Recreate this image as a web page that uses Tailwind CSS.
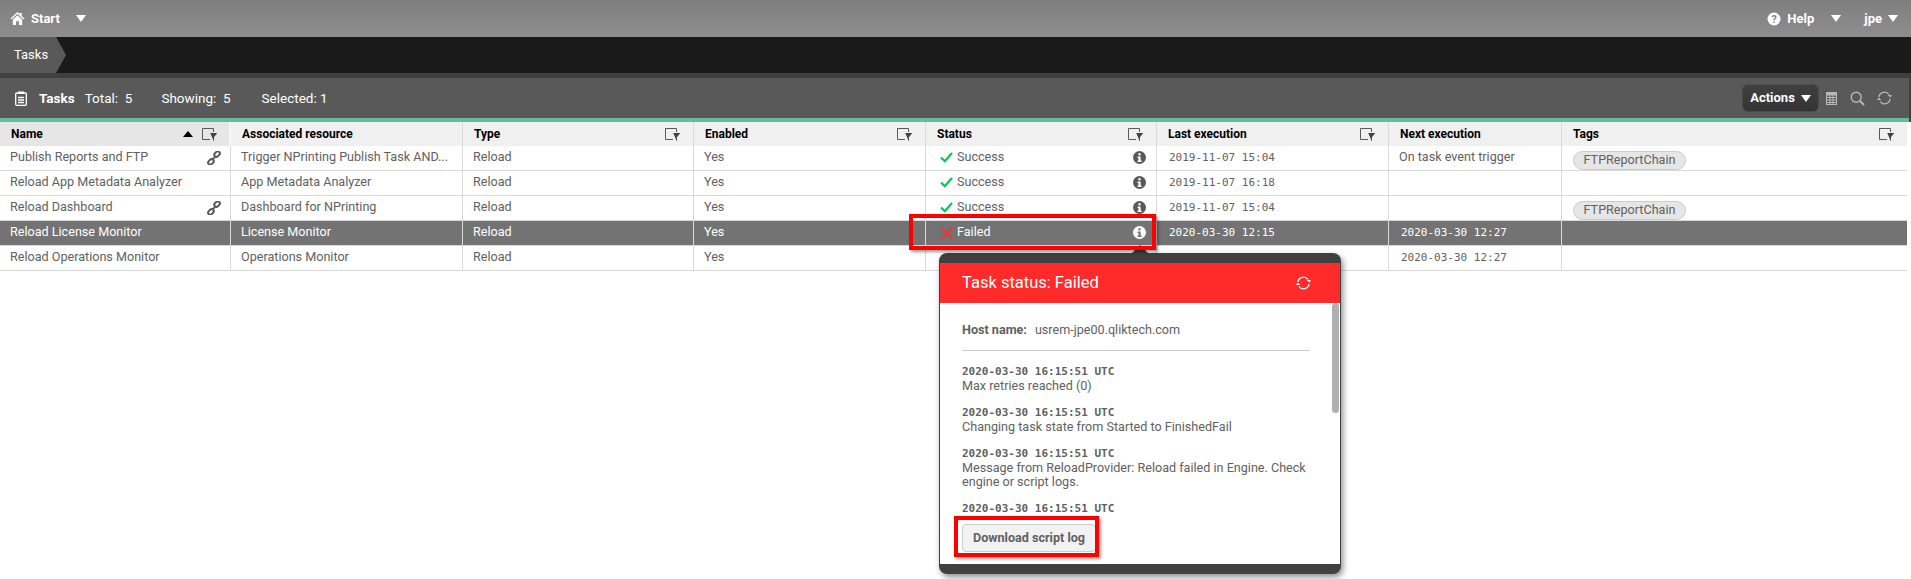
<!DOCTYPE html>
<html>
<head>
<meta charset="utf-8">
<script src="https://cdn.jsdelivr.net/npm/@tailwindcss/browser@4"></script>
</head>
<body class="bg-white overflow-hidden font-['Roboto',sans-serif] text-[12.6px] text-[#616161]">
<div class="relative w-[1911px] h-[579px] overflow-hidden">
  <!-- top bar -->
  <div class="h-[37px] bg-linear-to-b from-[#7e7e7e] to-[#8e8e8e] flex items-center text-white font-bold text-[13px]">
    <svg class="ml-[10px] w-[15px] h-[15px]" viewBox="0 0 16 16" fill="#fff"><path d="M8 1 L0.5 8 L1.5 9 L8 3 L14.5 9 L15.5 8 L12.5 5.2 V2 H10.5 V3.3 Z"/><path d="M3 9 L8 4.5 L13 9 V15 H9.5 V11 H6.5 V15 H3 Z"/></svg>
    <span class="ml-[6px]">Start</span>
    <svg class="ml-[16px] w-[10px] h-[7px]" viewBox="0 0 10 7" fill="#fff"><path d="M0 0H10L5 7Z"/></svg>
    <div class="flex-1"></div>
    <svg class="w-[14px] h-[14px]" viewBox="0 0 14 14"><circle cx="7" cy="7" r="6.5" fill="#fff"/><text x="7" y="10.8" text-anchor="middle" font-size="10.5" font-weight="700" fill="#808080" font-family="Roboto">?</text></svg>
    <span class="ml-[6px]">Help</span>
    <svg class="ml-[17px] w-[10px] h-[7px]" viewBox="0 0 10 7" fill="#fff"><path d="M0 0H10L5 7Z"/></svg>
    <span class="ml-[23px]">jpe</span>
    <svg class="ml-[6px] mr-[13px] w-[10px] h-[7px]" viewBox="0 0 10 7" fill="#fff"><path d="M0 0H10L5 7Z"/></svg>
  </div>
  <!-- breadcrumb -->
  <div class="h-[36px] bg-[#1a1a1a] flex">
    <div class="w-[66px] h-full bg-[#595959] [clip-path:polygon(0_0,56px_0,66px_50%,56px_100%,0_100%)] text-white text-[13px] pl-[14px] flex items-center">Tasks</div>
  </div>
  <div class="bg-[#404040] pt-[5px] pr-[2px]">
    <!-- toolbar -->
    <div class="h-[40px] bg-[#595959] flex items-center text-white text-[13.5px]">
      <svg class="ml-[15px] w-[12px] h-[15px]" viewBox="0 0 12 15" fill="none" stroke="#fff" stroke-width="1.3"><rect x="0.7" y="2" width="10.6" height="12.3" rx="1"/><rect x="3" y="0.5" width="6" height="2.5" fill="#fff" stroke="none"/><path d="M3 6.5H9M3 9H9M3 11.5H9"/></svg>
      <span class="ml-[12px] font-bold text-[13.5px]">Tasks</span>
      <span class="ml-[10px]">Total:&nbsp; 5</span>
      <span class="ml-[29px]">Showing:&nbsp; 5</span>
      <span class="ml-[31px]">Selected: 1</span>
      <div class="flex-1"></div>
      <div class="w-[77px] h-[28px] rounded-[6px] bg-linear-to-b from-[#404040] to-[#333333] border border-[#4a4a4a] flex items-center justify-center font-bold text-[13px]">Actions
        <svg class="ml-[6px] w-[10px] h-[7px]" viewBox="0 0 10 7" fill="#fff"><path d="M0 0H10L5 7Z"/></svg>
      </div>
      <svg class="ml-[7px] w-[11px] h-[13px]" viewBox="0 0 11 13" fill="none" stroke="#b8b8b8"><rect x="0.5" y="0.5" width="10" height="12"/><rect x="0.5" y="0.5" width="10" height="2.5" fill="#b8b8b8"/><path d="M0.5 5.5H10.5M0.5 8H10.5M0.5 10.5H10.5M4 3V12.5M7 3V12.5"/></svg>
      <svg class="ml-[13px] w-[15px] h-[15px]" viewBox="0 0 15 15" fill="none" stroke="#b8b8b8"><circle cx="6.2" cy="6.2" r="5" stroke-width="1.4"/><path d="M10 10L14 14" stroke-width="2"/></svg>
      <svg class="ml-[11px] mr-[16px] w-[17px] h-[16px]" viewBox="0 0 17 16" fill="none" stroke="#b8b8b8" stroke-width="1.3"><path d="M3 7A5.5 5.5 0 0 1 13 4.5"/><path d="M14 9A5.5 5.5 0 0 1 4 11.5"/><path d="M14.5 8L11.5 5.5H16Z M2.5 8L5.5 10.5H1Z" fill="#b8b8b8" stroke="none" transform="translate(0 -0.5)"/></svg>
    </div>
    <div class="h-[4px] bg-[#64bc9e]"></div>
  </div>
  <!-- table -->
  <div class="w-[1907px] grid grid-cols-[231px_232px_231px_232px_231px_232px_173px_345px] leading-none">
    <!-- header -->
    <div class="relative h-[24px] bg-[#e6e6e6] border-r-2 border-[#f5f5f5] pl-[11px] flex items-center font-bold text-[12px] text-black">Name
      <svg class="absolute left-[183px] top-[9px] w-[10px] h-[6px]" viewBox="0 0 10 6" fill="#000"><path d="M0 6H10L5 0Z"/></svg>
      <svg class="absolute left-[202px] top-[6px] w-[15px] h-[13px]" viewBox="0 0 15 13" fill="none" stroke="#595959"><path d="M8 11.5H0.5V0.5H11.5V4"/><path d="M8.5 5.5H14.5L11.5 9V12.5" fill="#404040" stroke="#404040" stroke-width="1"/></svg>
    </div>
    <div class="relative h-[24px] bg-[#f0f0f0] border-r border-[#d9d9d9] pl-[11px] flex items-center font-bold text-[12px] text-black">Associated resource</div>
    <div class="relative h-[24px] bg-[#f0f0f0] border-r border-[#d9d9d9] pl-[11px] flex items-center font-bold text-[12px] text-black">Type
      <svg class="absolute right-[13px] top-[6px] w-[15px] h-[13px]" viewBox="0 0 15 13" fill="none" stroke="#595959"><path d="M8 11.5H0.5V0.5H11.5V4"/><path d="M8.5 5.5H14.5L11.5 9V12.5" fill="#404040" stroke="#404040" stroke-width="1"/></svg>
    </div>
    <div class="relative h-[24px] bg-[#f0f0f0] border-r border-[#d9d9d9] pl-[11px] flex items-center font-bold text-[12px] text-black">Enabled
      <svg class="absolute right-[13px] top-[6px] w-[15px] h-[13px]" viewBox="0 0 15 13" fill="none" stroke="#595959"><path d="M8 11.5H0.5V0.5H11.5V4"/><path d="M8.5 5.5H14.5L11.5 9V12.5" fill="#404040" stroke="#404040" stroke-width="1"/></svg>
    </div>
    <div class="relative h-[24px] bg-[#f0f0f0] border-r border-[#d9d9d9] pl-[11px] flex items-center font-bold text-[12px] text-black">Status
      <svg class="absolute right-[13px] top-[6px] w-[15px] h-[13px]" viewBox="0 0 15 13" fill="none" stroke="#595959"><path d="M8 11.5H0.5V0.5H11.5V4"/><path d="M8.5 5.5H14.5L11.5 9V12.5" fill="#404040" stroke="#404040" stroke-width="1"/></svg>
    </div>
    <div class="relative h-[24px] bg-[#f0f0f0] border-r border-[#d9d9d9] pl-[11px] flex items-center font-bold text-[12px] text-black">Last execution
      <svg class="absolute right-[13px] top-[6px] w-[15px] h-[13px]" viewBox="0 0 15 13" fill="none" stroke="#595959"><path d="M8 11.5H0.5V0.5H11.5V4"/><path d="M8.5 5.5H14.5L11.5 9V12.5" fill="#404040" stroke="#404040" stroke-width="1"/></svg>
    </div>
    <div class="relative h-[24px] bg-[#f0f0f0] border-r border-[#d9d9d9] pl-[11px] flex items-center font-bold text-[12px] text-black">Next execution</div>
    <div class="relative h-[24px] bg-[#f0f0f0] pl-[11px] flex items-center font-bold text-[12px] text-black">Tags
      <svg class="absolute right-[13px] top-[6px] w-[15px] h-[13px]" viewBox="0 0 15 13" fill="none" stroke="#595959"><path d="M8 11.5H0.5V0.5H11.5V4"/><path d="M8.5 5.5H14.5L11.5 9V12.5" fill="#404040" stroke="#404040" stroke-width="1"/></svg>
    </div>

    <!-- row 1 -->
    <div class="relative h-[25px] border-r border-b border-[#d9d9d9] pl-[10px] pb-[1px] flex items-center">Publish Reports and FTP
      <svg class="absolute left-[207px] top-[5px] w-[14px] h-[14px]" viewBox="0 0 14 14" fill="none" stroke="#595959" stroke-width="2"><rect x="7" y="1" width="6" height="4.2" rx="2" transform="rotate(-45 10 3)"/><rect x="1" y="8.8" width="6" height="4.2" rx="2" transform="rotate(-45 4 11)"/><path d="M5.5 8.5L8.5 5.5"/></svg>
    </div>
    <div class="h-[25px] border-r border-b border-[#d9d9d9] pl-[10px] pb-[1px] flex items-center">Trigger NPrinting Publish Task AND...</div>
    <div class="h-[25px] border-r border-b border-[#d9d9d9] pl-[10px] pb-[1px] flex items-center">Reload</div>
    <div class="h-[25px] border-r border-b border-[#d9d9d9] pl-[10px] pb-[1px] flex items-center">Yes</div>
    <div class="relative h-[25px] border-r border-b border-[#d9d9d9] pl-[14px] pb-[1px] flex items-center">
      <svg class="w-[13px] h-[11px] mr-[4px]" viewBox="0 0 13 11" fill="none" stroke="#00c853" stroke-width="2.2"><path d="M1 5.5L4.8 9.2L12 1"/></svg>Success
      <svg class="absolute right-[10px] top-[5px] w-[13px] h-[13px]" viewBox="0 0 13 13"><circle cx="6.5" cy="6.5" r="6.5" fill="#595959"/><rect x="5.4" y="2.2" width="2.2" height="2.2" fill="#fff"/><path d="M4.6 5.5H7.6V9.6H8.6V11H4.6V9.6H5.5V6.9H4.6Z" fill="#fff"/></svg>
    </div>
    <div class="h-[25px] border-r border-b border-[#d9d9d9] pl-[12px] pb-[1px] flex items-center font-['DejaVu_Sans_Mono',monospace] text-[11px]">2019-11-07 15:04</div>
    <div class="h-[25px] border-r border-b border-[#d9d9d9] pl-[10px] pb-[1px] flex items-center">On task event trigger</div>
    <div class="h-[25px] border-b border-[#d9d9d9] pl-[11px] flex items-center"><span class="h-[19px] w-[113px] mt-[4px] rounded-full bg-[#e6e6e6] border border-[#cccccc] flex items-center justify-center">FTPReportChain</span></div>

    <!-- row 2 -->
    <div class="h-[25px] border-r border-b border-[#d9d9d9] pl-[10px] pb-[1px] flex items-center">Reload App Metadata Analyzer</div>
    <div class="h-[25px] border-r border-b border-[#d9d9d9] pl-[10px] pb-[1px] flex items-center">App Metadata Analyzer</div>
    <div class="h-[25px] border-r border-b border-[#d9d9d9] pl-[10px] pb-[1px] flex items-center">Reload</div>
    <div class="h-[25px] border-r border-b border-[#d9d9d9] pl-[10px] pb-[1px] flex items-center">Yes</div>
    <div class="relative h-[25px] border-r border-b border-[#d9d9d9] pl-[14px] pb-[1px] flex items-center">
      <svg class="w-[13px] h-[11px] mr-[4px]" viewBox="0 0 13 11" fill="none" stroke="#00c853" stroke-width="2.2"><path d="M1 5.5L4.8 9.2L12 1"/></svg>Success
      <svg class="absolute right-[10px] top-[5px] w-[13px] h-[13px]" viewBox="0 0 13 13"><circle cx="6.5" cy="6.5" r="6.5" fill="#595959"/><rect x="5.4" y="2.2" width="2.2" height="2.2" fill="#fff"/><path d="M4.6 5.5H7.6V9.6H8.6V11H4.6V9.6H5.5V6.9H4.6Z" fill="#fff"/></svg>
    </div>
    <div class="h-[25px] border-r border-b border-[#d9d9d9] pl-[12px] pb-[1px] flex items-center font-['DejaVu_Sans_Mono',monospace] text-[11px]">2019-11-07 16:18</div>
    <div class="h-[25px] border-r border-b border-[#d9d9d9]"></div>
    <div class="h-[25px] border-b border-[#d9d9d9]"></div>

    <!-- row 3 -->
    <div class="relative h-[25px] border-r border-b border-[#d9d9d9] pl-[10px] pb-[1px] flex items-center">Reload Dashboard
      <svg class="absolute left-[207px] top-[5px] w-[14px] h-[14px]" viewBox="0 0 14 14" fill="none" stroke="#595959" stroke-width="2"><rect x="7" y="1" width="6" height="4.2" rx="2" transform="rotate(-45 10 3)"/><rect x="1" y="8.8" width="6" height="4.2" rx="2" transform="rotate(-45 4 11)"/><path d="M5.5 8.5L8.5 5.5"/></svg>
    </div>
    <div class="h-[25px] border-r border-b border-[#d9d9d9] pl-[10px] pb-[1px] flex items-center">Dashboard for NPrinting</div>
    <div class="h-[25px] border-r border-b border-[#d9d9d9] pl-[10px] pb-[1px] flex items-center">Reload</div>
    <div class="h-[25px] border-r border-b border-[#d9d9d9] pl-[10px] pb-[1px] flex items-center">Yes</div>
    <div class="relative h-[25px] border-r border-b border-[#d9d9d9] pl-[14px] pb-[1px] flex items-center">
      <svg class="w-[13px] h-[11px] mr-[4px]" viewBox="0 0 13 11" fill="none" stroke="#00c853" stroke-width="2.2"><path d="M1 5.5L4.8 9.2L12 1"/></svg>Success
      <svg class="absolute right-[10px] top-[5px] w-[13px] h-[13px]" viewBox="0 0 13 13"><circle cx="6.5" cy="6.5" r="6.5" fill="#595959"/><rect x="5.4" y="2.2" width="2.2" height="2.2" fill="#fff"/><path d="M4.6 5.5H7.6V9.6H8.6V11H4.6V9.6H5.5V6.9H4.6Z" fill="#fff"/></svg>
    </div>
    <div class="h-[25px] border-r border-b border-[#d9d9d9] pl-[12px] pb-[1px] flex items-center font-['DejaVu_Sans_Mono',monospace] text-[11px]">2019-11-07 15:04</div>
    <div class="h-[25px] border-r border-b border-[#d9d9d9]"></div>
    <div class="h-[25px] border-b border-[#d9d9d9] pl-[11px] flex items-center"><span class="h-[19px] w-[113px] mt-[4px] rounded-full bg-[#e6e6e6] border border-[#cccccc] flex items-center justify-center">FTPReportChain</span></div>

    <!-- row 4 selected -->
    <div class="h-[25px] bg-[#737373] text-white border-r border-b border-[#d9d9d9] pl-[10px] pb-[1px] flex items-center">Reload License Monitor</div>
    <div class="h-[25px] bg-[#737373] text-white border-r border-b border-[#d9d9d9] pl-[10px] pb-[1px] flex items-center">License Monitor</div>
    <div class="h-[25px] bg-[#737373] text-white border-r border-b border-[#d9d9d9] pl-[10px] pb-[1px] flex items-center">Reload</div>
    <div class="h-[25px] bg-[#737373] text-white border-r border-b border-[#d9d9d9] pl-[10px] pb-[1px] flex items-center">Yes</div>
    <div class="relative h-[25px] bg-[#737373] text-white border-r border-b border-[#d9d9d9] pl-[15px] pb-[1px] flex items-center">
      <svg class="w-[12px] h-[12px] mr-[4px]" viewBox="0 0 12 12" fill="none" stroke="#ff2a2a" stroke-width="1.6"><path d="M0.5 0.5L11.5 11.5M11.5 0.5L0.5 11.5"/></svg>Failed
      <svg class="absolute right-[10px] top-[5px] w-[13px] h-[13px]" viewBox="0 0 13 13"><circle cx="6.5" cy="6.5" r="6.5" fill="#fff"/><rect x="5.4" y="2.2" width="2.2" height="2.2" fill="#737373"/><path d="M4.6 5.5H7.6V9.6H8.6V11H4.6V9.6H5.5V6.9H4.6Z" fill="#737373"/></svg>
    </div>
    <div class="h-[25px] bg-[#737373] text-white border-r border-b border-[#d9d9d9] pl-[12px] pb-[1px] flex items-center font-['DejaVu_Sans_Mono',monospace] text-[11px]">2020-03-30 12:15</div>
    <div class="h-[25px] bg-[#737373] text-white border-r border-b border-[#d9d9d9] pl-[12px] pb-[1px] flex items-center font-['DejaVu_Sans_Mono',monospace] text-[11px]">2020-03-30 12:27</div>
    <div class="h-[25px] bg-[#737373] border-b border-[#d9d9d9]"></div>

    <!-- row 5 -->
    <div class="h-[25px] border-r border-b border-[#d9d9d9] pl-[10px] pb-[1px] flex items-center">Reload Operations Monitor</div>
    <div class="h-[25px] border-r border-b border-[#d9d9d9] pl-[10px] pb-[1px] flex items-center">Operations Monitor</div>
    <div class="h-[25px] border-r border-b border-[#d9d9d9] pl-[10px] pb-[1px] flex items-center">Reload</div>
    <div class="h-[25px] border-r border-b border-[#d9d9d9] pl-[10px] pb-[1px] flex items-center">Yes</div>
    <div class="h-[25px] border-r border-b border-[#d9d9d9]"></div>
    <div class="h-[25px] border-r border-b border-[#d9d9d9]"></div>
    <div class="h-[25px] border-r border-b border-[#d9d9d9] pl-[12px] pb-[1px] flex items-center font-['DejaVu_Sans_Mono',monospace] text-[11px]">2020-03-30 12:27</div>
    <div class="h-[25px] border-b border-[#d9d9d9]"></div>
  </div>

  <!-- popup arrow -->
  <div class="absolute left-[1132px] top-[245px] w-0 h-0 border-x-[8px] border-x-transparent border-b-[8px] border-b-[#404040]"></div>
  <!-- popup -->
  <div class="absolute left-[939px] top-[253px] w-[402px] h-[321px] rounded-[8px] bg-[#404040] pt-[10px] pb-[10px] px-[1px] shadow-[2px_3px_6px_rgba(0,0,0,0.45)] flex flex-col">
    <div class="h-[40px] shrink-0 bg-[#ff2a2a] flex items-center justify-between pl-[22px] pr-[28px] text-white text-[16.5px]">Task status: Failed
      <svg class="w-[17px] h-[16px]" viewBox="0 0 17 16" fill="none" stroke="#fff" stroke-width="1.3"><path d="M3 7A5.5 5.5 0 0 1 13 4.5"/><path d="M14 9A5.5 5.5 0 0 1 4 11.5"/><path d="M14.5 8L11.5 5.5H16Z M2.5 8L5.5 10.5H1Z" fill="#fff" stroke="none" transform="translate(0 -0.5)"/></svg>
    </div>
    <div class="relative flex-1 bg-white flex flex-col min-h-0">
      <div class="absolute right-[1px] top-0 w-[7px] h-[110px] rounded-full bg-[#b0b0b0]"></div>
      <div class="h-[212px] shrink-0 overflow-hidden pl-[22px] pr-[26px] pt-[20px] leading-[14px]">
        <div class="h-[14px] mr-[4px] pb-[13px] box-content border-b border-[#cccccc]"><b class="font-bold">Host name:</b><span class="ml-[8px]">usrem-jpe00.qliktech.com</span></div>
        <div class="mt-[14px]"><b class="block font-['DejaVu_Sans_Mono',monospace] text-[11px] font-bold">2020-03-30 16:15:51 UTC</b>Max retries reached (0)</div>
        <div class="mt-[13px]"><b class="block font-['DejaVu_Sans_Mono',monospace] text-[11px] font-bold">2020-03-30 16:15:51 UTC</b>Changing task state from Started to FinishedFail</div>
        <div class="mt-[13px]"><b class="block font-['DejaVu_Sans_Mono',monospace] text-[11px] font-bold">2020-03-30 16:15:51 UTC</b>Message from ReloadProvider: Reload failed in Engine. Check engine or script logs.</div>
        <div class="mt-[13px]"><b class="block font-['DejaVu_Sans_Mono',monospace] text-[11px] font-bold">2020-03-30 16:15:51 UTC</b></div>
      </div>
      <div class="pl-[22px] pt-[9px]">
        <div class="w-[134px] h-[28px] rounded-[4px] bg-[#f2f2f2] border border-[#cccccc] font-bold flex items-center justify-center">Download script log</div>
      </div>
    </div>
  </div>

  <!-- annotation boxes -->
  <div class="absolute left-[909px] top-[214px] w-[247px] h-[36px] border-[4px] border-[#ff0000] shadow-[2px_2px_3px_rgba(0,0,0,0.4)]"></div>
  <div class="absolute left-[954px] top-[516px] w-[145px] h-[41px] border-[4px] border-[#ff0000] shadow-[2px_2px_3px_rgba(0,0,0,0.4)]"></div>
</div>
</body>
</html>
